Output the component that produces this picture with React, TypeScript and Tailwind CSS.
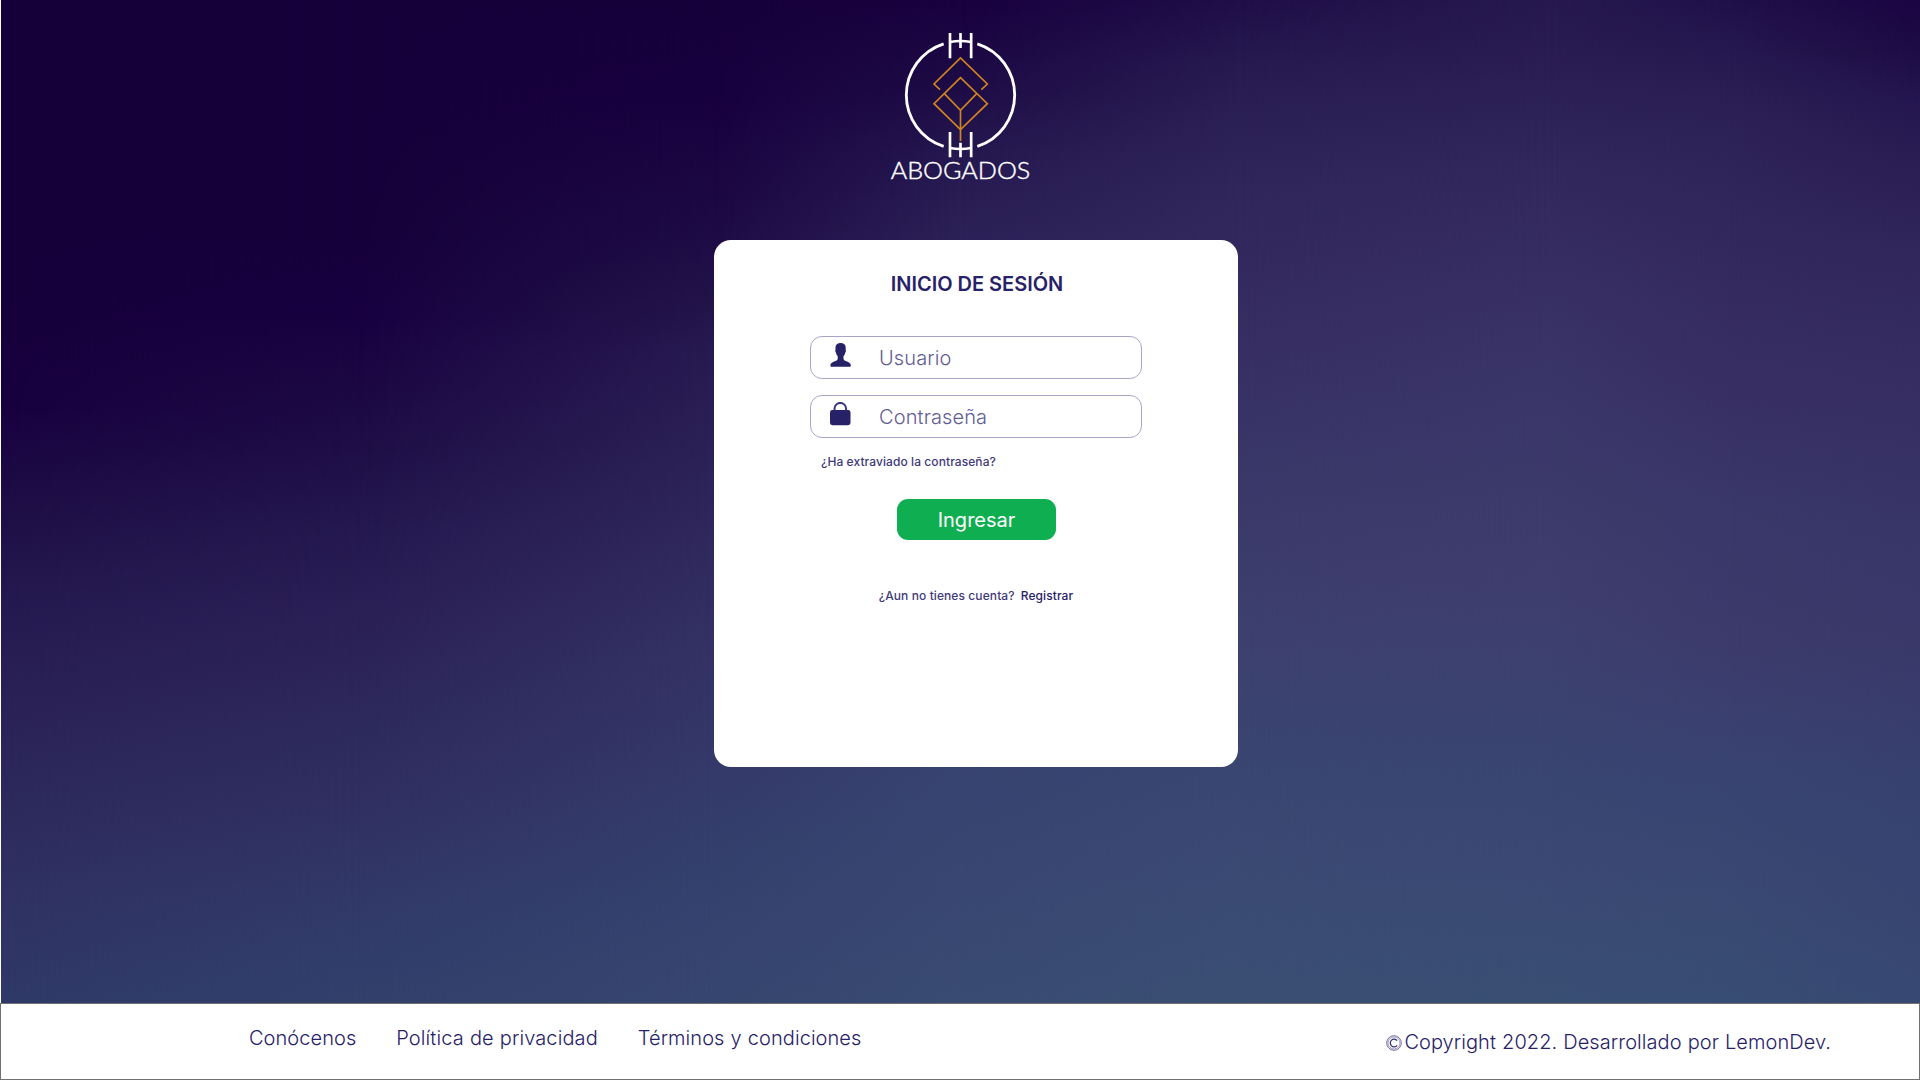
import React from "react";

function Backdrop() {
  return (
    <div aria-hidden="true" className="col-start-1 row-start-1 grid h-[1003px] *:col-start-1 *:row-start-1">
      <div className="bg-[linear-gradient(180deg,#16003b_0px,#16003b_300px,#18003f_400px,#1b0743_455px,#1f1048_525px,#241950_600px,#2a2157_700px,#2d295c_800px,#2f3263_900px,#2f3968_1003px)]" />
      <div className="bg-[linear-gradient(180deg,#16003b_0px,#16003b_230px,#180040_310px,#1c0743_384px,#1e0e47_448px,#241850_530px,#2a1f56_610px,#2d275b_700px,#302f62_800px,#313968_900px,#32406b_1003px)] [mask-image:linear-gradient(90deg,transparent_0px,black_356px)]" />
      <div className="bg-[linear-gradient(180deg,#16003b_0px,#18003f_96px,#1c0743_192px,#1f0d47_256px,#221449_305px,#271a52_352px,#2b2157_448px,#30295d_544px,#343163_640px,#343768_736px,#343e6b_832px,#35436e_928px,#36466f_1003px)] [mask-image:linear-gradient(90deg,transparent_356px,black_712px)]" />
      <div className="bg-[linear-gradient(180deg,#19003f_0px,#1e0c46_90px,#251850_155px,#2c2158_240px,#332c60_400px,#373766_560px,#384370_767px,#394b72_1003px)] [mask-image:linear-gradient(90deg,transparent_712px,black_960px)]" />
      <div className="bg-[linear-gradient(180deg,#1f0e48_0px,#261a51_64px,#2c2157_128px,#30265c_192px,#33295e_256px,#362d61_320px,#383165_384px,#3b3a6a_512px,#3d406e_640px,#3b436f_704px,#3a4671_768px,#3a4b73_900px,#3a4e73_1003px)] [mask-image:linear-gradient(90deg,transparent_960px,black_1240px)]" />
      <div className="bg-[linear-gradient(180deg,#261950_0px,#2a1d54_64px,#2e2459_128px,#33295e_192px,#362d61_256px,#393265_320px,#3a3568_384px,#3d3b6b_512px,#3e3d6d_576px,#3d406e_640px,#3b426f_704px,#3a4571_768px,#3a4a73_900px,#394e73_1003px)] [mask-image:linear-gradient(90deg,transparent_1240px,black_1550px)]" />
      <div className="bg-[linear-gradient(180deg,#1f1049_0px,#271a52_64px,#2d2257_128px,#33295e_256px,#382f64_384px,#3a3769_512px,#3c3b6b_640px,#394371_768px,#394972_900px,#384d73_1003px)] [mask-image:linear-gradient(90deg,transparent_1550px,black_1730px)]" />
      <div className="bg-[linear-gradient(180deg,#1b0442_0px,#1d0c45_50px,#241650_100px,#2a1d54_160px,#31275c_256px,#362e62_384px,#383467_512px,#3a3969_640px,#37406e_768px,#374972_1003px)] [mask-image:linear-gradient(90deg,transparent_1730px,black_1919px)]" />
    </div>
  );
}

function Logo() {
  return (
    <svg viewBox="0 0 540 510" width="180" height="170" fill="none" className="block">
      <g stroke="#ffffff" strokeWidth="8.5">
        <path d="M221 71.5A161.5 161.5 0 0 0 221 379" />
        <path d="M322 71.5A161.5 161.5 0 0 1 322 379" />
        <path d="M240 39V115M303.500 39V115M271.500 39V84M240 336V412M303.500 336V412M271.500 368V412" strokeWidth="8" />
        <path d="M240 66Q271.500 60 303.500 66M240 384Q271.500 390 303.500 384" strokeWidth="7.5" />
      </g>
      <g stroke="#cf8420" strokeWidth="5">
        <path d="M210 209L192 192L271.500 114L352 192L334 209" />
        <path d="M271.500 173L192 251L271.500 329L352 251Z" />
        <path d="M223 221L271.500 271L320 221M271.500 271V363" />
      </g>
      <text x="62" y="478" textLength="419" lengthAdjust="spacingAndGlyphs" fill="#ffffff" stroke="#ffffff" strokeWidth="1.2" fontSize="69" fontWeight="300" fontFamily="Lato, sans-serif">
        ABOGADOS
      </text>
    </svg>
  );
}

function UserIcon() {
  return (
    <svg viewBox="0 0 21 24" width="21" height="24" fill="#272168" className="block">
      <path d="M10.600 0C13.800 0 15.700 1.600 15.700 4.600V7C16.100 7.300 15.900 9 15.300 9.400C15 11 14.400 12.300 13.500 13.300V15.800C13.700 17.300 15 17.700 17 18.600C19.500 19.500 20.800 20.800 20.800 22.300C20.800 23.300 20.400 23.800 19.500 23.800H1.700C.8 23.800.4 23.300.4 22.300C.4 20.800 1.700 19.500 4.200 18.600C6.200 17.700 7.500 17.300 7.700 15.800V13.300C6.800 12.300 6.200 11 5.900 9.400C5.300 9 5.100 7.300 5.500 7V4.600C5.500 1.600 7.400 0 10.600 0Z" />
    </svg>
  );
}

function LockIcon() {
  return (
    <svg viewBox="0 0 21 24" width="21" height="24" className="block">
      <rect x="0" y="8" width="20.500" height="15.200" rx="2.400" fill="#272168" />
      <path d="M4.500 8.500V6.700A5.800 5.800 0 0 1 16.100 6.700V8.500" fill="none" stroke="#3a357c" strokeWidth="2" />
    </svg>
  );
}

function CopyrightMark() {
  return (
    <svg viewBox="0 0 16 16" width="16" height="16" fill="none" stroke="#353074" className="block" role="img" aria-label="©">
      <circle cx="8" cy="8" r="7.300" strokeWidth=".7" />
      <circle cx="8" cy="8" r="6" strokeWidth=".45" />
      <path d="M11 5.700A3.700 3.900 0 1 0 11 10.300" strokeWidth="1.300" />
    </svg>
  );
}

function Field({ icon, label, type }: { icon: React.ReactNode; label: string; type: string }) {
  return (
    <label className="flex h-[43px] w-[332px] items-start rounded-[12px] border border-[#a8a5c6] pl-[19px]">
      <span className="mt-[6px] w-[49px]">{icon}</span>
      <input
        type={type}
        placeholder={label}
        className="h-[42px] w-[240px] bg-transparent text-[20px] font-light tracking-[0.12px] text-[#272168] outline-none placeholder:text-[#625d94]"
      />
    </label>
  );
}

export default function App() {
  return (
    <div className="flex h-[1080px] w-[1920px] flex-col overflow-hidden bg-white font-['Inter',sans-serif] text-[#272168]">
      <main className="ml-px grid h-[1003px] grid-cols-1">
        <Backdrop />
        <div className="isolate col-start-1 row-start-1 flex flex-col">
          <div className="ml-[869px] mt-[20px]">
            <Logo />
          </div>
          <section className="ml-[713px] mt-[50px] flex h-[527px] w-[524px] flex-col items-center rounded-[17px] bg-white">
            <h1 className="ml-[2px] mt-[32px] text-[20px] font-semibold leading-6 tracking-[-0.02px]">INICIO DE SESIÓN</h1>
            <form className="mt-[40px] flex flex-col items-center gap-[16px]">
              <Field icon={<UserIcon />} label="Usuario" type="text" />
              <Field icon={<LockIcon />} label="Contraseña" type="password" />
            </form>
            <a className="ml-[107px] mt-[16px] self-start text-[12px] font-medium leading-4 tracking-[0.08px] text-[#3f3a7a]">¿Ha extraviado la contraseña?</a>
            <button className="mt-[29px] h-[41px] w-[159px] rounded-[11px] bg-[#0fae50] pl-px text-[20px] text-white">Ingresar</button>
            <p className="mt-[48px] flex gap-[6px] text-[12px] font-medium leading-4 tracking-[0.09px] text-[#3f3a7a]">
              <span>¿Aun no tienes cuenta?</span>
              <a className="text-[#272168]">Registrar</a>
            </p>
          </section>
        </div>
      </main>
      <footer className="flex h-[77px] justify-between border border-[#707070] bg-white text-[20px] font-light leading-6 tracking-[0.06px] text-[#272168] [word-spacing:0.4px]">
        <nav className="ml-[248px] mt-[22px] flex gap-[40px]">
          <a>Conócenos</a>
          <a className="tracking-[0.1px]">Política de privacidad</a>
          <a>Términos y condiciones</a>
        </nav>
        <p className="mr-[88px] mt-[26px] flex">
          <span className="mr-[2px] mt-[5px]">
            <CopyrightMark />
          </span>
          Copyright 2022. Desarrollado por LemonDev.
        </p>
      </footer>
    </div>
  );
}
